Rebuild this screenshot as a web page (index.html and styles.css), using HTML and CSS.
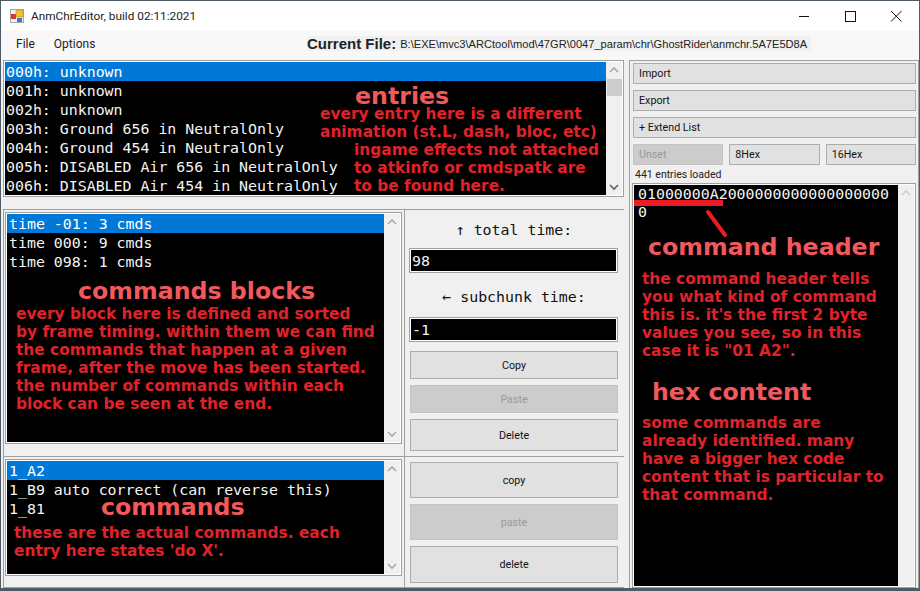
FILE: index.html
```html
<!DOCTYPE html>
<html lang="en">
<head>
<meta charset="utf-8">
<title>AnmChrEditor</title>
<link rel="stylesheet" href="styles.css">
</head>
<body>
<div class="window">
  <header class="titlebar">
    <svg class="appicon" width="14" height="14" viewBox="0 0 14 14"><rect x="0.5" y="0.5" width="13" height="13" fill="#f2f2f2" stroke="#a8a8a8"/><rect x="1" y="5" width="5" height="5" fill="#d8392f"/><rect x="6" y="1" width="7" height="7" fill="#f2c230" stroke="#a88a30" stroke-width="0.6"/><rect x="7" y="9" width="5" height="4" fill="#3d78c8"/></svg>
    <span class="title">AnmChrEditor, build 02:11:2021</span>
    <div class="controls">
      <svg width="46" height="30" viewBox="0 0 46 30"><path d="M18 15.5H28" stroke="#111" fill="none"/></svg>
      <svg width="46" height="30" viewBox="0 0 46 30"><rect x="18.5" y="10.5" width="10" height="10" stroke="#111" fill="none"/></svg>
      <svg width="46" height="30" viewBox="0 0 46 30"><path d="M18 10L28.5 20.5M28.5 10L18 20.5" stroke="#111" fill="none"/></svg>
    </div>
  </header>
  <div class="menubar">
    <nav class="menu"><span>File</span><span>Options</span></nav>
    <div class="current"><b>Current File:</b><span class="path">B:\EXE\mvc3\ARCtool\mod\47GR\0047_param\chr\GhostRider\anmchr.5A7E5D8A</span></div>
  </div>
  <main class="main">
    <section class="leftcol">
      <div class="list toplist">
        <ul class="rows">
          <li class="sel">000h: unknown</li>
          <li>001h: unknown</li>
          <li>002h: unknown</li>
          <li>003h: Ground 656 in NeutralOnly</li>
          <li>004h: Ground 454 in NeutralOnly</li>
          <li>005h: DISABLED Air 656 in NeutralOnly</li>
          <li>006h: DISABLED Air 454 in NeutralOnly</li>
        </ul>
        <div class="scroll"><svg class="chev" width="16" height="17" viewBox="0 0 16 17"><path d="M4 11L8 7L12 11" /></svg><div class="thumb"></div><svg class="chev dark" width="16" height="17" viewBox="0 0 16 17"><path d="M4 6L8 10L12 6" /></svg></div>
        <div class="note n-entries">
          <h2 class="note-head">entries</h2>
          <p class="note-body">every entry here is a different<br>animation (st.L, dash, bloc, etc)</p>
          <p class="note-body indent">ingame effects not attached<br>to atkinfo or cmdspatk are<br>to be found here.</p>
        </div>
      </div>
      <div class="panel blocks">
        <div class="list midlist">
          <ul class="rows">
            <li class="sel">time -01: 3 cmds</li>
            <li>time 000: 9 cmds</li>
            <li>time 098: 1 cmds</li>
          </ul>
          <div class="scroll"><svg class="chev" width="16" height="17" viewBox="0 0 16 17"><path d="M4 11L8 7L12 11" /></svg><svg class="chev" width="16" height="17" viewBox="0 0 16 17"><path d="M4 6L8 10L12 6" /></svg></div>
          <div class="note n-blocks">
            <h2 class="note-head">commands blocks</h2>
            <p class="note-body">every block here is defined and sorted<br>by frame timing. within them we can find<br>the commands that happen at a given<br>frame, after the move has been started.<br>the number of commands within each<br>block can be seen at the end.</p>
          </div>
        </div>
        <div class="side">
          <label class="mono-label first-label">↑ total time:</label>
          <div class="field">98</div>
          <label class="mono-label second-label">← subchunk time:</label>
          <div class="field">-1</div>
          <button class="btn b28 first">Copy</button>
          <button class="btn b28 off">Paste</button>
          <button class="btn b32">Delete</button>
        </div>
      </div>
      <div class="panel cmds">
        <div class="list botlist">
          <ul class="rows">
            <li class="sel">1_A2</li>
            <li>1_B9 auto correct (can reverse this)</li>
            <li>1_81</li>
          </ul>
          <div class="scroll"><svg class="chev" width="16" height="17" viewBox="0 0 16 17"><path d="M4 11L8 7L12 11" /></svg><svg class="chev" width="16" height="17" viewBox="0 0 16 17"><path d="M4 6L8 10L12 6" /></svg></div>
          <div class="note n-cmds">
            <h2 class="note-head">commands</h2>
            <p class="note-body">these are the actual commands. each<br>entry here states 'do X'.</p>
          </div>
        </div>
        <div class="side tall">
          <button class="btn b37">copy</button>
          <button class="btn b37 off">paste</button>
          <button class="btn b37 last">delete</button>
        </div>
      </div>
    </section>
    <aside class="rightcol">
      <button class="btn wide">Import</button>
      <button class="btn wide">Export</button>
      <button class="btn wide">+ Extend List</button>
      <div class="hexbtns">
        <button class="btn wide off">Unset</button>
        <button class="btn wide">8Hex</button>
        <button class="btn wide">16Hex</button>
      </div>
      <div class="loaded">441 entries loaded</div>
      <div class="list hexbox">
        <div class="hextext">01000000A2000000000000000000<br>0</div>
        <div class="scroll"><svg class="chev faint" width="16" height="17" viewBox="0 0 16 17"><path d="M4 11L8 7L12 11" /></svg></div>
        <div class="underline"></div>
        <svg class="slash" width="30" height="32" viewBox="0 0 30 32"><path d="M4 3L21 26" stroke="#ed1c24" stroke-width="4" stroke-linecap="round"/></svg>
        <div class="note n-hex">
          <h2 class="note-head h1">command header</h2>
          <p class="note-body">the command header tells<br>you what kind of command<br>this is. it's the first 2 byte<br>values you see, so in this<br>case it is "01 A2".</p>
          <h2 class="note-head h2">hex content</h2>
          <p class="note-body">some commands are<br>already identified. many<br>have a bigger hex code<br>content that is particular to<br>that command.</p>
        </div>
      </div>
    </aside>
  </main>
</div>
</body>
</html>
```
FILE: styles.css
```css
* { box-sizing: border-box; }
html, body { margin: 0; padding: 0; }
body { width: 920px; height: 591px; overflow: hidden; background: #f0f0f0; font-family: Roboto, "Liberation Sans", sans-serif; color: #111; }
.window { width: 920px; height: 591px; display: flex; flex-direction: column; border: 1px solid #4f5b66; border-width: 1px 1px 3px 1px; background: #f0f0f0; }

.titlebar { height: 30px; background: #fff; display: flex; align-items: center; padding-left: 9px; flex: none; }
.appicon { flex: none; }
.title { margin-left: 7px; font-size: 11.8px; color: #222; }
.controls { margin-left: auto; display: flex; }

.menubar { height: 29px; background: #f8f8f8; display: flex; flex: none; align-items: flex-start; }
.menu { display: flex; gap: 19px; padding: 6px 0 0 15px; font-size: 12px; color: #222; width: 306px; flex: none; }
.current { margin-top: 5px; height: 15px; background: #f0f0f0; padding-right: 4px; display: flex; align-items: center; white-space: nowrap; }
.current b { font-family: "Liberation Sans", sans-serif; font-size: 15px; color: #222; }
.path { font-family: "Liberation Sans", sans-serif; font-size: 11.1px; margin-left: 4px; color: #222; }

.main { flex: 1; display: flex; min-height: 0; }
.leftcol { width: 623px; padding-left: 2px; display: flex; flex-direction: column; flex: none; }
.rightcol { margin-left: 5px; flex: 1; border: 1px solid #a0a0a0; border-bottom: 0; padding: 2px 2px 0 3px; display: flex; flex-direction: column; gap: 6px; min-width: 0; }

.list { position: relative; display: flex; background: #000; border: 1px solid #a0a0a0; outline: 1px solid #fff; outline-offset: -2px; flex: none; }
.rows { list-style: none; margin: 0; padding: 1px 0 0 1px; flex: 1; min-width: 0; font-family: "DejaVu Sans Mono", monospace; font-size: 14.9px; color: #f4f4f4; }
.rows li { height: 19px; line-height: 21px; padding-left: 2px; white-space: pre; }
.rows li.sel { background: #0078d7; color: #fff; }
.toplist .rows li { padding-left: 1px; }
.scroll { width: 17px; flex: none; background: #f0f0f0; display: flex; flex-direction: column; justify-content: space-between; }
.chev { display: block; flex: none; }
.chev path { fill: none; stroke: #a9a9a9; stroke-width: 1.6; }
.chev.dark path { stroke: #606060; }
.chev.faint path { stroke: #cfcfcf; }
.thumb { width: 15px; height: 17px; background: #cdcdcd; flex: none; margin: 1px 0 auto 1px; }

.toplist { width: 621px; height: 137px; margin-bottom: 12px; }
.panel { display: flex; border-top: 1px solid #a0a0a0; border-left: 1px solid #a0a0a0; }
.blocks { height: 247px; padding: 2px 0 0 1px; }
.cmds { height: 132px; padding: 2px 0 0 1px; border-bottom: 1px solid #a0a0a0; }
.midlist { width: 397px; height: 232px; }
.botlist { width: 397px; height: 117px; }
.side { margin-left: 2px; border-left: 1px solid #a0a0a0; margin-top: -2px; padding: 0 0 0 5px; width: 219px; display: flex; flex-direction: column; align-items: flex-start; }
.side.tall { gap: 6px; padding-top: 5px; }

.mono-label { width: 208px; text-align: center; font-family: "DejaVu Sans Mono", monospace; font-size: 14.9px; color: #111; height: 19px; line-height: 19px; }
.first-label { margin: 11px 0 8px; }
.second-label { margin: 15px 0 10px; }
.field { width: 209px; height: 25px; margin-left: -1px; background: #000; border: 1px solid #a0a0a0; outline: 1px solid #fff; outline-offset: -2px; color: #f4f4f4; font-family: "DejaVu Sans Mono", monospace; font-size: 14.9px; line-height: 24px; padding-left: 2px; flex: none; }

.btn { display: block; background: #e1e1e1; border: 1px solid #adadad; font-family: Roboto, "Liberation Sans", sans-serif; font-size: 10.7px; color: #111; padding: 0; flex: none; width: 208px; margin: 0; }
.btn.off { background: #cccccc; color: #9a9a9a; border-color: #c4c4c4; }
.b28 { height: 28px; margin-top: 6px; }
.b28.first { margin-top: 9px; }
.b32 { height: 32px; margin-top: 6px; }
.b37 { height: 36px; }
.b37.last { height: 37px; }

.wide { width: 100%; height: 21px; text-align: left; padding-left: 5px; }
.hexbtns { display: flex; gap: 6px; }
.hexbtns .btn { flex: 1; width: 90px; }
.loaded { font-size: 10.5px; margin-top: -3px; height: 14px; line-height: 14px; padding-left: 2px; color: #222; flex: none; }
.hexbox { flex: 1; margin: -5px 0 0 -1px; min-height: 0; }
.hextext { flex: 1; padding: 1px 0 0 5px; font-family: "DejaVu Sans Mono", monospace; font-size: 14.9px; line-height: 18px; color: #f4f4f4; white-space: nowrap; overflow: hidden; }
.underline { position: absolute; left: 1px; top: 16px; width: 89px; height: 6px; background: #ed1c24; }
.slash { position: absolute; left: 71px; top: 25px; }

.note { position: absolute; font-family: "DejaVu Sans", sans-serif; font-weight: 700; white-space: nowrap; }
.note-head { margin: 0; font-size: 23.7px; line-height: 28px; font-weight: 700; color: #f2585c; }
.note-body { margin: 0; font-size: 15.4px; line-height: 18px; color: #e0222a; }
.indent { padding-left: 34px; }
.n-entries { left: 316px; top: 21px; }
.n-entries .note-head { padding-left: 35px; margin-bottom: -5px; }
.n-blocks { left: 10px; top: 64px; }
.n-blocks .note-head { padding-left: 62px; }
.n-cmds { left: 8px; top: 33px; }
.n-cmds .note-head { padding-left: 87px; margin-bottom: 3px; }
.n-hex { left: 9px; top: 49px; }
.h1 { padding-left: 6px; margin-bottom: 9px; }
.h2 { padding-left: 10px; margin: 18px 0 8px; }
```
